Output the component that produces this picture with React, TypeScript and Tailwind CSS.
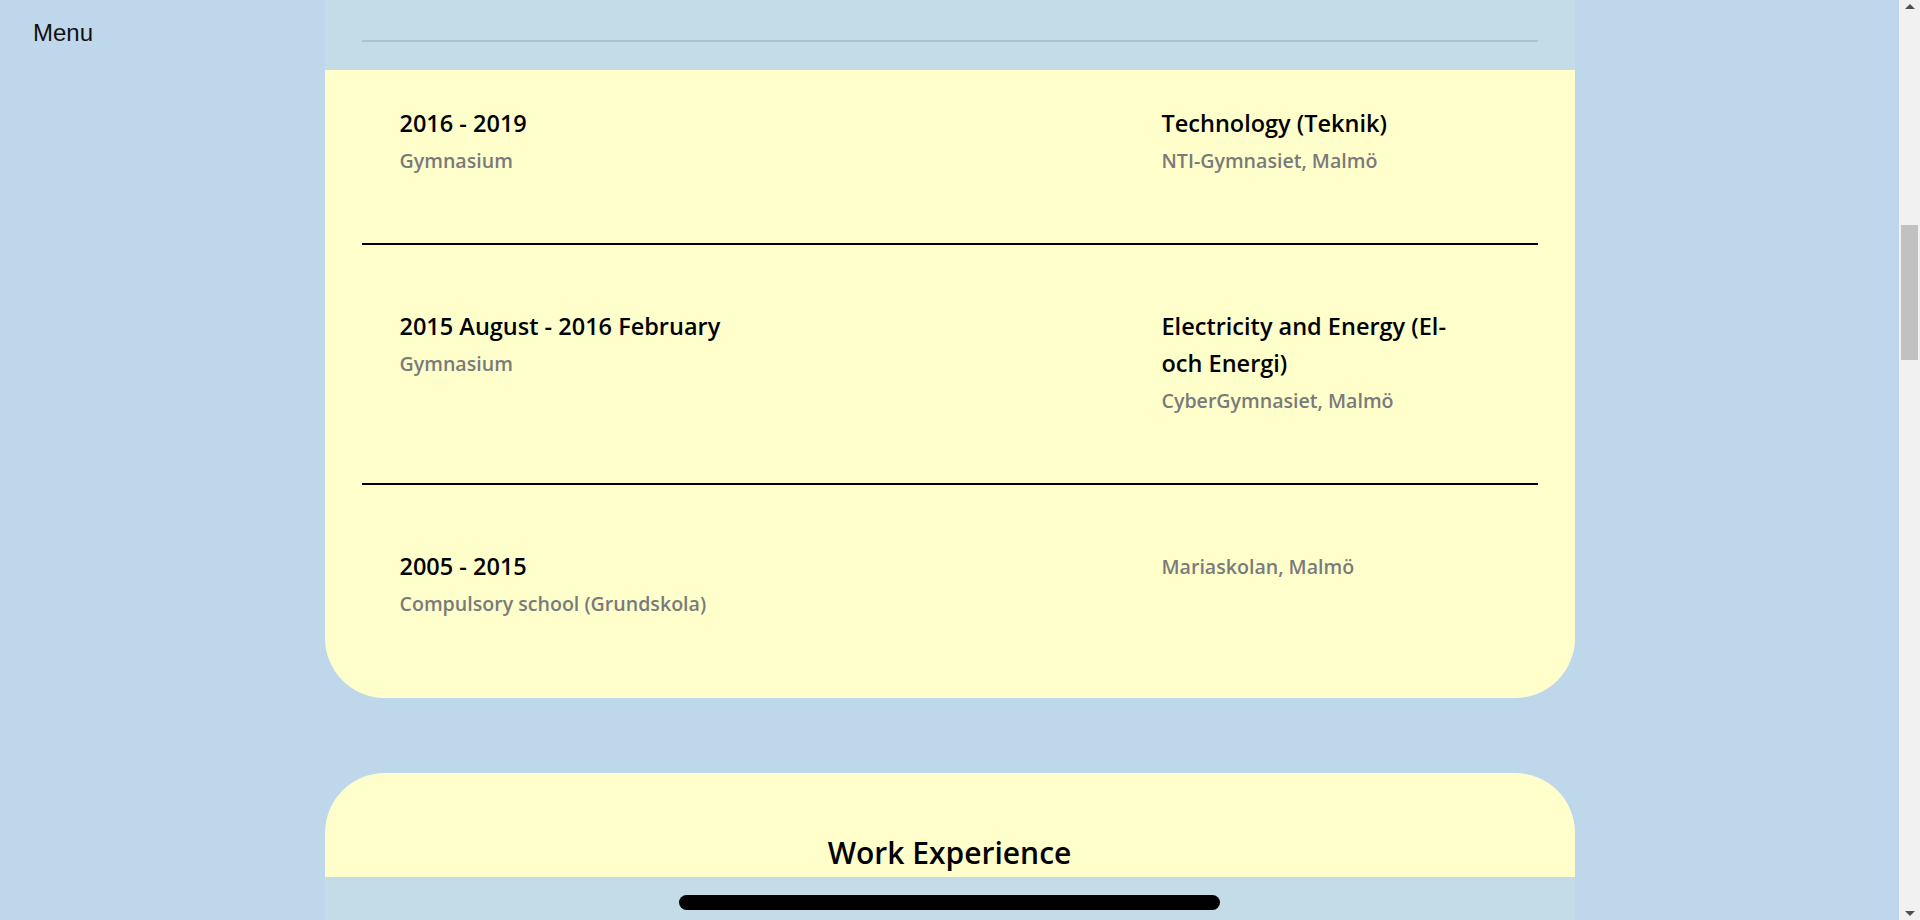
import React from 'react';

type Entry = {
  period: string;
  level: string;
  program?: React.ReactNode;
  school: string;
};

const education: Entry[] = [
  {
    period: '2016 - 2019',
    level: 'Gymnasium',
    program: 'Technology (Teknik)',
    school: 'NTI-Gymnasiet, Malmö',
  },
  {
    period: '2015 August - 2016 February',
    level: 'Gymnasium',
    program: (
      <>
        Electricity and Energy (El-
        <br />
        och Energi)
      </>
    ),
    school: 'CyberGymnasiet, Malmö',
  },
  {
    period: '2005 - 2015',
    level: 'Compulsory school (Grundskola)',
    school: 'Mariaskolan, Malmö',
  },
];

const EntryRow = ({ entry, last }: { entry: Entry; last: boolean }) => (
  <div
    className={`grid grid-cols-[1fr_338px] px-[38px] pt-[63px] ${
      last ? 'pb-[75px]' : 'pb-[63px] border-b-2 border-black'
    }`}
  >
    <div>
      <div className="text-[23.5px] leading-[37px] font-semibold text-black">{entry.period}</div>
      <div className="text-[19.6px] leading-[38px] font-semibold text-[#7a7a7a]">{entry.level}</div>
    </div>
    <div>
      {entry.program && (
        <div className="text-[23.5px] leading-[37px] font-semibold text-black">{entry.program}</div>
      )}
      <div className="text-[19.6px] leading-[38px] font-semibold text-[#7a7a7a]">{entry.school}</div>
    </div>
  </div>
);

// fake classic scrollbar on the right edge
const Scrollbar = () => (
  <div className="w-[21px] h-full bg-[#f1f1f1] flex flex-col items-center shrink-0">
    <svg className="mt-[3px]" width="10" height="6" viewBox="0 0 10 6">
      <path d="M0 6 L5 1 L10 6 Z" fill="#505050" />
    </svg>
    <div className="mt-[216px] w-[17px] h-[135px] bg-[#c1c1c1]" />
    <div className="flex-1" />
    <svg className="mb-[3px]" width="10" height="6" viewBox="0 0 10 6">
      <path d="M0 0 L10 0 L5 5 Z" fill="#505050" />
    </svg>
  </div>
);

export default function App() {
  return (
    <div
      className="h-[920px] w-full overflow-hidden bg-[#bfd7ea] flex"
      style={{ fontFamily: '"Open Sans", Lato, sans-serif' }}
    >
      <div className="relative flex-1 h-full">
        {/* Menu toggle */}
        <div
          className="absolute left-[33px] top-[21px] text-[24px] leading-none text-[#111]"
          style={{ fontFamily: '"Liberation Sans", Arial, sans-serif' }}
        >
          Menu
        </div>

        <main className="w-[1250px] mx-auto">
          {/* Education card (scrolled partway) */}
          <section className="bg-[#ffffcc] rounded-b-[60px] px-[37px]">
            <div className="h-[42px] border-b-2 border-black" />
            {education.map((e, i) => (
              <EntryRow key={e.period} entry={e} last={i === education.length - 1} />
            ))}
          </section>

          {/* Work experience card */}
          <section className="mt-[75px] bg-[#ffffcc] rounded-[60px] px-[37px] pt-[56px] pb-[200px]">
            <h2 className="text-center text-[30px] leading-[48px] font-semibold text-black">
              Work Experience
            </h2>
          </section>
        </main>

        {/* top overlay bar */}
        <div className="absolute top-0 left-1/2 -translate-x-1/2 w-[1250px] h-[70px] bg-[#bdd8ea]/90" />

        {/* bottom overlay bar */}
        <div className="absolute bottom-0 left-1/2 -translate-x-1/2 w-[1250px] h-[43px] bg-[#bdd8ea]/90 flex justify-center pt-[18px]">
          <div className="w-[541px] h-[15px] rounded-full bg-black" />
        </div>
      </div>
      <Scrollbar />
    </div>
  );
}
